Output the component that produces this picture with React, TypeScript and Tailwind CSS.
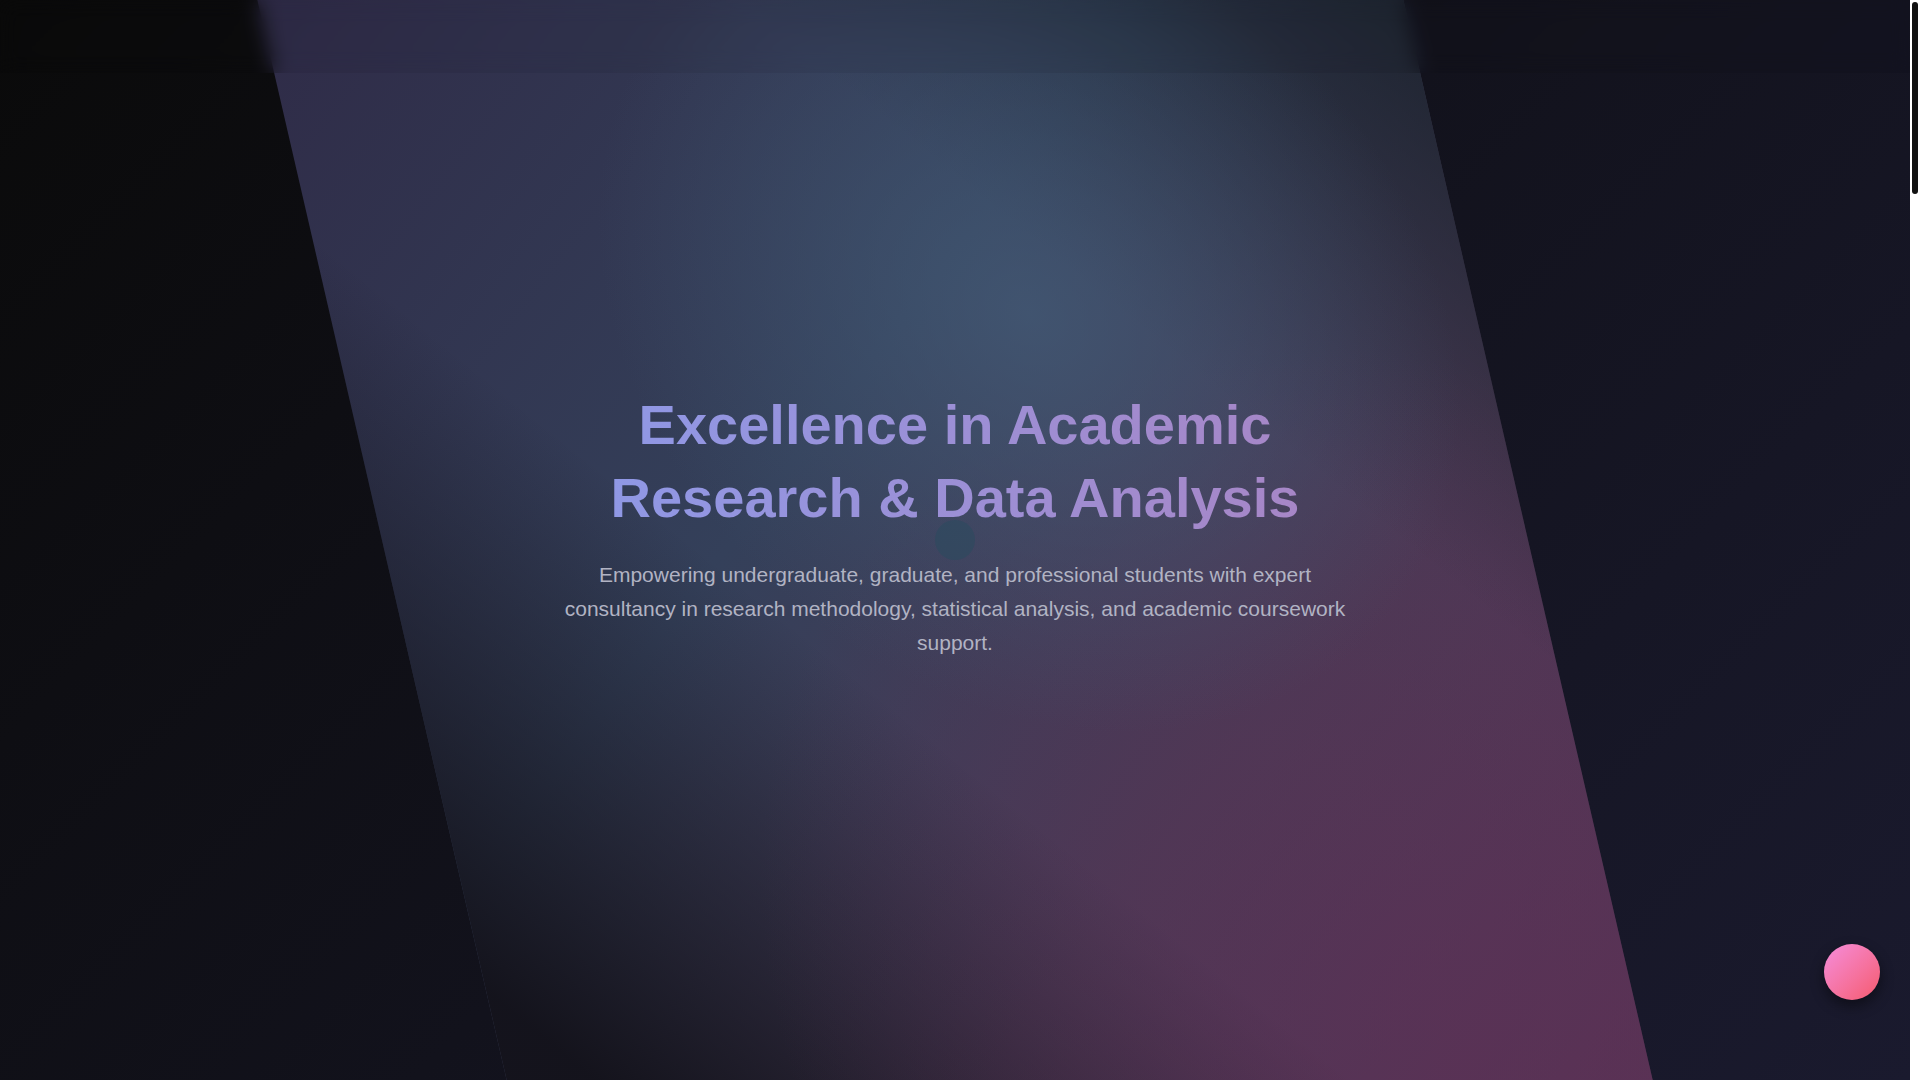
import { BarChart3, BookOpen, FlaskConical, GraduationCap, Mail, MessageCircle } from 'lucide-react'

const services = [
    { title: 'Research Methodology', icon: FlaskConical, text: 'Design robust studies with sound sampling, instruments and analysis plans.' },
    { title: 'Statistical Analysis', icon: BarChart3, text: 'SPSS, R, Stata and Python support from cleaning data to reporting results.' },
    { title: 'Coursework Support', icon: BookOpen, text: 'Guidance on assignments, literature reviews and structured academic writing.' },
    { title: 'Thesis Consultancy', icon: GraduationCap, text: 'One-to-one sessions for proposals, chapters and final dissertation defence.' },
]

function Header() {
    return (
        <header className="fixed top-0 left-0 right-[10px] z-40 h-[73px] bg-black/5 backdrop-blur-[10px]">
            <nav className="h-full max-w-7xl mx-auto px-8 flex items-center justify-between opacity-0">
                <span className="text-xl font-bold text-white">Academic Excellence</span>
            </nav>
        </header>
    )
}

function Hero() {
    return (
        <section className="relative h-screen overflow-hidden flex items-center justify-center bg-[linear-gradient(135deg,#0a0a0a_0%,#1a1a2e_100%)]">
            {/* slanted glow band */}
            <div className="absolute inset-0 pointer-events-none">
                <div className="absolute inset-y-0 left-1/2 w-[60%] -translate-x-1/2 skew-x-[13deg] bg-[radial-gradient(circle_420px_at_61%_29%,rgba(68,92,120,0.72),transparent),radial-gradient(circle_680px_at_84%_95%,rgba(92,48,86,0.6),transparent),linear-gradient(45deg,rgba(18,17,25,0.95)_4%,rgba(18,17,25,0)_38%,rgba(18,17,25,0)_70%,rgba(22,30,38,0.8)_100%),linear-gradient(135deg,#2f2b47_0%,#34405a_40%,#4a3a55_70%,#583354_100%)]" />
                <div className="absolute left-1/2 top-1/2 w-10 h-10 -translate-x-1/2 -translate-y-1/2 rounded-full bg-[#2a4a5e]/55" />
            </div>

            <div className="relative z-10 max-w-4xl px-4 pb-8 text-center">
                <h1 className="text-[56px] leading-[1.3] font-bold bg-gradient-to-r from-[#8c9ae9] to-[#a984c3] bg-clip-text text-transparent mb-6">
                    Excellence in Academic Research &amp; Data Analysis
                </h1>
                <p className="max-w-[800px] mx-auto text-[21px] leading-[1.6] text-[#b1b3c3]">
                    Empowering undergraduate, graduate, and professional students with expert consultancy in research methodology, statistical analysis, and academic coursework support.
                </p>
            </div>
        </section>
    )
}

export default function App() {
    return (
        <div className="flex h-screen bg-[#14141f] font-['Liberation_Sans',Arial,sans-serif] text-white">
            <main className="flex-1 min-w-0 overflow-y-auto [scrollbar-width:none]">
                <Header />
                <Hero />

                {/* Services */}
                <section className="min-h-screen py-24 px-8">
                    <div className="max-w-6xl mx-auto">
                        <h2 className="text-4xl font-bold text-center mb-4">Our Services</h2>
                        <p className="text-center text-gray-400 mb-16">Tailored support for every stage of your academic journey.</p>
                        <div className="grid grid-cols-2 gap-8">
                            {services.map((s) => (
                                <div key={s.title} className="p-8 rounded-2xl bg-white/5 border border-white/10">
                                    <s.icon className="w-10 h-10 text-[#8c9ae9] mb-4" />
                                    <h3 className="text-xl font-semibold mb-2">{s.title}</h3>
                                    <p className="text-gray-400">{s.text}</p>
                                </div>
                            ))}
                        </div>
                    </div>
                </section>

                {/* About */}
                <section className="min-h-screen py-24 px-8">
                    <div className="max-w-4xl mx-auto text-center">
                        <h2 className="text-4xl font-bold mb-6">Why Choose Us</h2>
                        <p className="text-lg text-gray-400 leading-relaxed">
                            Our consultants hold advanced degrees and years of experience guiding students through research design, data collection and analysis.
                        </p>
                    </div>
                </section>

                {/* Stats */}
                <section className="min-h-screen py-24 px-8">
                    <div className="max-w-5xl mx-auto grid grid-cols-3 gap-8 text-center">
                        <div><p className="text-5xl font-bold text-[#8c9ae9]">500+</p><p className="text-gray-400 mt-2">Students Supported</p></div>
                        <div><p className="text-5xl font-bold text-[#a984c3]">98%</p><p className="text-gray-400 mt-2">Satisfaction Rate</p></div>
                        <div><p className="text-5xl font-bold text-[#f093fb]">10+</p><p className="text-gray-400 mt-2">Years Experience</p></div>
                    </div>
                </section>

                {/* Contact */}
                <section className="min-h-screen py-24 px-8">
                    <div className="max-w-xl mx-auto text-center">
                        <h2 className="text-4xl font-bold mb-6">Get in Touch</h2>
                        <p className="text-gray-400 mb-8">Book a free consultation and tell us about your project.</p>
                        <div className="inline-flex items-center gap-2 px-6 py-3 rounded-full bg-gradient-to-r from-[#667eea] to-[#764ba2]">
                            <Mail className="w-5 h-5" />
                            Contact Us
                        </div>
                    </div>
                </section>

                <footer className="h-[640px] px-8 py-16 border-t border-white/10 text-center text-gray-500 text-sm">
                    © 2024 Academic Excellence. All rights reserved.
                </footer>
            </main>

            {/* page scrollbar: white track, dark thumb */}
            <div className="w-[10px] shrink-0 bg-white px-[2px] py-[2px]">
                <div className="h-[192px] rounded-full bg-[#111111]" />
            </div>

            {/* floating chat button */}
            <button className="fixed bottom-[80px] right-[40px] z-50 w-14 h-14 rounded-full bg-gradient-to-br from-[#f58cdc] to-[#f5596d] shadow-[0_6px_14px_rgba(0,0,0,0.45)] flex items-center justify-center">
                <MessageCircle className="w-6 h-6 text-white opacity-0" />
            </button>
        </div>
    )
}
